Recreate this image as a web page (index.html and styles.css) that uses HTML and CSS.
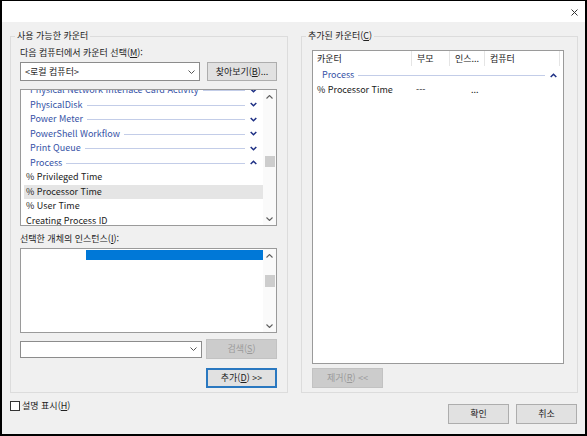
FILE: index.html
```html
<!DOCTYPE html>
<html lang="ko">
<head>
<meta charset="utf-8">
<title>카운터 추가</title>
<link rel="stylesheet" href="styles.css">
</head>
<body>
<div class="window">
  <div class="titlebar">
    <svg class="close" width="7" height="7" viewBox="0 0 7 7"><path d="M0.5 0.5 L6.5 6.5 M6.5 0.5 L0.5 6.5" stroke="#333" stroke-width="1" fill="none"/></svg>
  </div>
  <div class="content">
    <div class="groups">
      <div class="group group-left">
        <span class="legend">사용 가능한 카운터</span>
        <div class="label">다음 컴퓨터에서 카운터 선택(<u>M</u>):</div>
        <div class="row row-top">
          <div class="combo combo-top">
            <span>&lt;로컬 컴퓨터&gt;</span>
            <svg class="dd" width="7" height="4" viewBox="0 0 7 4"><path d="M0.5 0.5 L3.5 3.5 L6.5 0.5" stroke="#555" stroke-width="1" fill="none"/></svg>
          </div>
          <button class="btn btn-browse">찾아보기(<u>B</u>)...</button>
        </div>
        <div class="listbox counters">
          <div class="list-main">
            <div class="list-items">
              <div class="cat"><span>Physical Network Interface Card Activity</span><span class="line"></span><svg class="chev" width="7" height="5" viewBox="0 0 7 5"><path d="M0.7 1 L3.5 3.8 L6.3 1" stroke="#1d2f84" stroke-width="1.5" fill="none"/></svg></div>
              <div class="cat"><span>PhysicalDisk</span><span class="line"></span><svg class="chev" width="7" height="5" viewBox="0 0 7 5"><path d="M0.7 1 L3.5 3.8 L6.3 1" stroke="#1d2f84" stroke-width="1.5" fill="none"/></svg></div>
              <div class="cat"><span>Power Meter</span><span class="line"></span><svg class="chev" width="7" height="5" viewBox="0 0 7 5"><path d="M0.7 1 L3.5 3.8 L6.3 1" stroke="#1d2f84" stroke-width="1.5" fill="none"/></svg></div>
              <div class="cat"><span>PowerShell Workflow</span><span class="line"></span><svg class="chev" width="7" height="5" viewBox="0 0 7 5"><path d="M0.7 1 L3.5 3.8 L6.3 1" stroke="#1d2f84" stroke-width="1.5" fill="none"/></svg></div>
              <div class="cat"><span>Print Queue</span><span class="line"></span><svg class="chev" width="7" height="5" viewBox="0 0 7 5"><path d="M0.7 1 L3.5 3.8 L6.3 1" stroke="#1d2f84" stroke-width="1.5" fill="none"/></svg></div>
              <div class="cat"><span>Process</span><span class="line"></span><svg class="chev" width="7" height="5" viewBox="0 0 7 5"><path d="M0.7 4 L3.5 1.2 L6.3 4" stroke="#1d2f84" stroke-width="1.5" fill="none"/></svg></div>
              <div class="item">% Privileged Time</div>
              <div class="item sel">% Processor Time</div>
              <div class="item">% User Time</div>
              <div class="item">Creating Process ID</div>
            </div>
          </div>
          <div class="scroll scroll-counters">
            <div class="arrow"><svg width="7" height="4" viewBox="0 0 7 4"><path d="M0.5 3.5 L3.5 0.5 L6.5 3.5" stroke="#606060" stroke-width="1.1" fill="none"/></svg></div>
            <div class="track"><div class="thumb"></div></div>
            <div class="arrow"><svg width="7" height="4" viewBox="0 0 7 4"><path d="M0.5 0.5 L3.5 3.5 L6.5 0.5" stroke="#606060" stroke-width="1.1" fill="none"/></svg></div>
          </div>
        </div>
        <div class="label label-inst">선택한 개체의 인스턴스(<u>I</u>):</div>
        <div class="listbox instances">
          <div class="list-main">
            <div class="inst-sel"></div>
          </div>
          <div class="scroll scroll-inst">
            <div class="arrow"><svg width="7" height="4" viewBox="0 0 7 4"><path d="M0.5 3.5 L3.5 0.5 L6.5 3.5" stroke="#606060" stroke-width="1.1" fill="none"/></svg></div>
            <div class="track"><div class="thumb"></div></div>
            <div class="arrow"><svg width="7" height="4" viewBox="0 0 7 4"><path d="M0.5 0.5 L3.5 3.5 L6.5 0.5" stroke="#606060" stroke-width="1.1" fill="none"/></svg></div>
          </div>
        </div>
        <div class="row row-search">
          <div class="combo combo-search">
            <span></span>
            <svg class="dd" width="7" height="4" viewBox="0 0 7 4"><path d="M0.5 0.5 L3.5 3.5 L6.5 0.5" stroke="#555" stroke-width="1" fill="none"/></svg>
          </div>
          <button class="btn btn-disabled btn-search">검색(<u>S</u>)</button>
        </div>
        <div class="row row-add">
          <button class="btn btn-default">추가(<u>D</u>) &gt;&gt;</button>
        </div>
      </div>
      <div class="group group-right">
        <span class="legend">추가된 카운터(<u>C</u>)</span>
        <div class="listview">
          <div class="lv-header">
            <div class="col c1">카운터</div>
            <div class="col c2">부모</div>
            <div class="col c3">인스...</div>
            <div class="col c4">컴퓨터</div>
          </div>
          <div class="lv-body">
            <div class="cat lv-cat"><span>Process</span><span class="line"></span><svg class="chev" width="7" height="5" viewBox="0 0 7 5"><path d="M0.7 4 L3.5 1.2 L6.3 4" stroke="#1d2f84" stroke-width="1.5" fill="none"/></svg></div>
            <div class="lv-row">
              <div class="cell c1">% Processor Time</div>
              <div class="cell c2">---</div>
              <div class="cell c3 dots">...</div>
              <div class="cell c4"></div>
            </div>
          </div>
        </div>
        <button class="btn btn-disabled btn-remove">제거(<u>R</u>) &lt;&lt;</button>
      </div>
    </div>
    <div class="footer">
      <label class="check"><span class="box"></span><span>설명 표시(<u>H</u>)</span></label>
      <div class="footer-buttons">
        <button class="btn btn-dlg">확인</button>
        <button class="btn btn-dlg">취소</button>
      </div>
    </div>
  </div>
</div>
</body>
</html>
```

FILE: styles.css
```css
* { box-sizing: border-box; }
html, body { margin: 0; padding: 0; background: #fff; }
body {
  font-family: "Noto Sans CJK KR", "Noto Sans", sans-serif;
  font-size: 9px;
  line-height: 12px;
  color: #222;
}
u { text-decoration: underline; text-underline-offset: 1px; }

.window {
  width: 587px;
  height: 436px;
  border-style: solid;
  border-color: #000;
  border-width: 1px 2px 2px 2px;
  display: flex;
  flex-direction: column;
  overflow: hidden;
}
.titlebar {
  height: 21px;
  flex: none;
  background: #fff;
  display: flex;
  justify-content: flex-end;
  align-items: flex-start;
  padding: 8px 7px 0 0;
}
.close { display: block; }

.content {
  flex: 1;
  background: #f0f0f0;
  padding: 14px 7px 0 8px;
  display: flex;
  flex-direction: column;
}
.groups { display: flex; gap: 13px; }
.group {
  position: relative;
  border: 1px solid #dcdcdc;
  height: 357px;
  display: flex;
  flex-direction: column;
}
.legend {
  position: absolute;
  top: -7px;
  left: 4px;
  padding: 0 2px;
  background: #f0f0f0;
  white-space: nowrap;
}
.group-left { width: 278px; padding: 10px 10px 0 9px; }
.group-right { width: 277px; padding: 13px 13px 0 10px; }

.label { height: 12px; white-space: nowrap; }
.row { display: flex; align-items: center; }
.row-top { margin-top: 3px; height: 19px; }
.row-search { margin-top: 6px; height: 20px; }
.row-add { margin-top: 9px; justify-content: flex-end; }

.combo {
  background: #fff;
  border: 1px solid #8c8c8c;
  display: flex;
  align-items: center;
  justify-content: space-between;
  padding: 0 4px 0 4px;
}
.combo-top { width: 180px; height: 19px; }
.combo-search { width: 182px; height: 17px; }
.dd { display: block; }

.btn {
  font: inherit;
  color: #222;
  background: #e1e1e1;
  border: 1px solid #adadad;
  padding: 0;
  margin: 0;
  display: flex;
  align-items: center;
  justify-content: center;
  white-space: nowrap;
}
.btn-browse { width: 70px; height: 19px; margin-left: auto; }
.btn-search { width: 71px; height: 20px; margin-left: auto; }
.btn-disabled { background: #cccccc; border-color: #c2c2c2; color: #9a9a9a; }
.btn-default { width: 71px; height: 20px; border: 2px solid #2a78c0; }
.btn-remove { width: 71px; height: 20px; margin-top: 4px; }
.btn-dlg { width: 61px; height: 20px; }

.listbox {
  background: #fff;
  border: 1px solid #9a9a9a;
  display: flex;
  overflow: hidden;
}
.counters { margin-top: 8px; height: 137px; }
.instances { margin-top: 3px; height: 85px; }
.label-inst { margin-top: 7px; }
.list-main { flex: 1; overflow: hidden; min-width: 0; }
.list-items { margin-top: -7px; }

.cat {
  display: flex;
  align-items: center;
  height: 14.5px;
  padding: 0 6px 0 9px;
  color: #3652a6;
  white-space: nowrap;
}
.cat .line {
  flex: 1;
  height: 1px;
  background: #c3cde8;
  margin: 1px 5px 0 4px;
}
.chev { display: block; flex: none; }
.item {
  height: 14.5px;
  line-height: 14.5px;
  margin-left: 3px;
  padding-left: 2px;
  white-space: nowrap;
}
.item.sel { background: #e5e5e5; }

.scroll {
  width: 13px;
  flex: none;
  display: flex;
  flex-direction: column;
  background: #fafafa;
}
.scroll .arrow {
  height: 13px;
  display: flex;
  align-items: center;
  justify-content: center;
  flex: none;
}
.scroll .arrow svg { display: block; }
.scroll .track { flex: 1; display: flex; flex-direction: column; align-items: center; }
.scroll .thumb { width: 10px; background: #cdcdcd; }
.scroll-counters .thumb { margin-top: 53px; height: 11px; }
.scroll-inst .thumb { margin-top: 13px; height: 12px; }

.inst-sel {
  margin: 1px 0 0 65px;
  height: 10px;
  background: #0078d7;
}

.listview {
  width: 252px;
  height: 314px;
  background: #fff;
  border: 1px solid #9a9a9a;
}
.lv-header { display: flex; height: 15px; }
.col {
  height: 15px;
  line-height: 15px;
  border-right: 1px solid #e5e5e5;
  padding-left: 5px;
  white-space: nowrap;
}
.c1 { width: 99px; padding-left: 4px; }
.c2 { width: 38px; }
.c3 { width: 35px; }
.c4 { width: 75px; }
.lv-body { padding-top: 2px; }
.lv-row { display: flex; height: 14.5px; line-height: 14.5px; }
.cell { padding-left: 4px; white-space: nowrap; }
.cell.c3.dots { padding-left: 21px; }

.footer { display: flex; align-items: flex-start; }
.check {
  display: flex;
  align-items: center;
  gap: 2px;
  margin-top: 7px;
  height: 12px;
}
.check .box {
  width: 10px;
  height: 10px;
  background: #fff;
  border: 1px solid #333;
}
.footer-buttons {
  margin-left: auto;
  margin-right: 1px;
  margin-top: 11px;
  display: flex;
  gap: 7px;
}
```
